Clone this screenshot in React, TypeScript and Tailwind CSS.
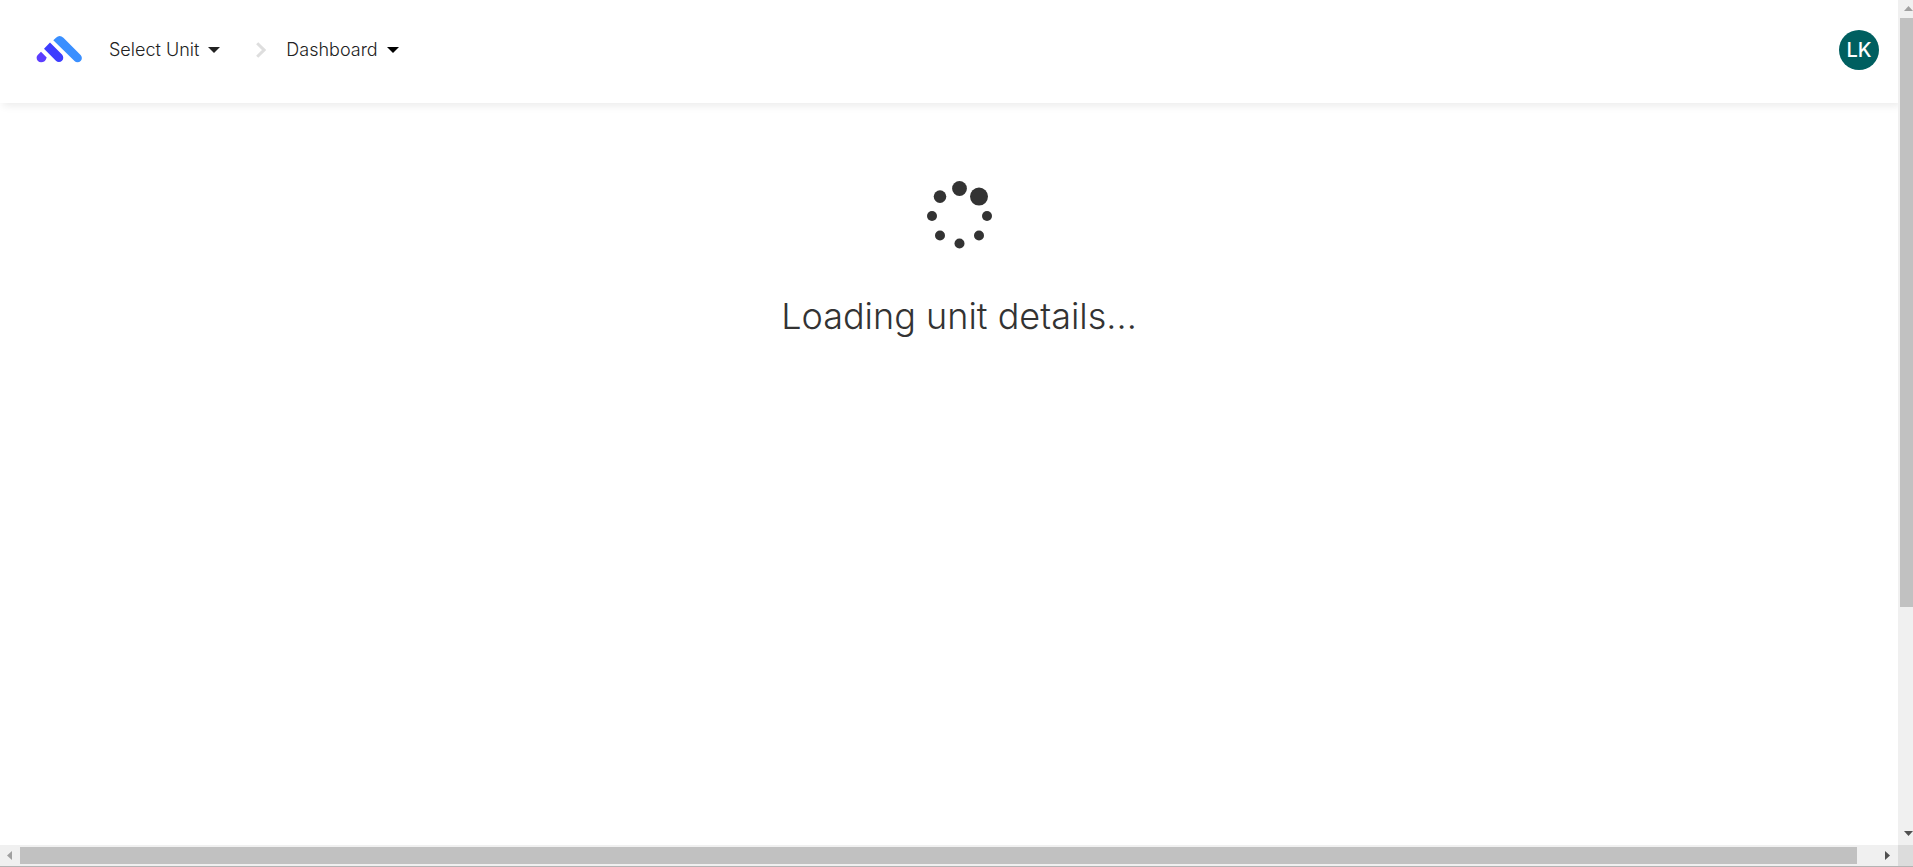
const dots: [number, number, number][] = [
  [35.5, 12.5, 7.4],
  [55, 20.6, 9],
  [63, 40, 5],
  [55, 59.5, 5],
  [35.5, 67.5, 5],
  [16, 59.5, 5],
  [8, 40, 5],
  [16, 20.6, 6.3],
];

function Logo() {
  return (
    <svg width="46" height="28" viewBox="0 0 46 28" aria-hidden="true">
      <path d="M17.3 4.3 20 1.8Q23.6-1.8 27.4 1.8L44.6 19A4.3 4.3 0 0 1 38.5 25.1Z" fill="#3a8fff" />
      <path d="M14 6.6 26 18.6A4.3 4.3 0 0 1 19.9 24.7L8 12.8Z" fill="#3d3dff" />
      <path d="M5 15.8 10.7 21.4Q9.2 26.3 5.1 26.3A4.5 4.5 0 0 1 .6 21.8Q.6 20.2 1.7 19.1Z" fill="#5c3dff" />
    </svg>
  );
}

function Caret({ className }: { className: string }) {
  return (
    <svg width="12" height="6" viewBox="0 0 12 6" className={className} aria-hidden="true">
      <path d="M0 0H12L6 6Z" fill="currentColor" />
    </svg>
  );
}

function Header() {
  return (
    <header className="flex h-[103px] items-start bg-white pt-[30px] pr-[19px] pl-9 shadow-[3px_3px_8px_rgba(0,0,0,0.08)]">
      <nav aria-label="Breadcrumb" className="flex h-10 items-center text-lg font-light text-[#222]">
        <a href="#" aria-label="Home" className="mr-[27px]">
          <Logo />
        </a>
        <button type="button" className="flex items-center gap-[9px]">
          Select Unit
          <Caret className="text-[#222]" />
        </button>
        <svg width="10" height="16" viewBox="0 0 10 16" className="mr-5 ml-9" aria-hidden="true">
          <path d="M1.2 1.3 8 8 1.2 14.7" fill="none" stroke="#dedede" strokeWidth="3" />
        </svg>
        <button type="button" className="flex items-center gap-[9px]">
          Dashboard
          <Caret className="text-black" />
        </button>
      </nav>
      <button type="button" aria-label="LK account" className="ml-auto size-10 rounded-full bg-[#005f60] text-xl font-medium text-white">
        LK
      </button>
    </header>
  );
}

function VerticalScrollbar() {
  return (
    <div aria-hidden="true" className="flex w-[15px] shrink-0 flex-col overflow-hidden bg-[#f0f0f0] pl-0.5">
      <svg width="17" height="18" viewBox="0 0 17 18" className="shrink-0">
        <path d="M4 11 8.5 6 13 11Z" fill="#a0a0a0" />
      </svg>
      <div className="h-[69.7%] w-[17px] bg-[#c1c1c1]" />
      <svg width="17" height="18" viewBox="0 0 17 18" className="mt-auto shrink-0">
        <path d="M4 4H13L8.5 9Z" fill="#505050" />
      </svg>
    </div>
  );
}

function HorizontalScrollbar() {
  return (
    <div aria-hidden="true" className="flex h-[22px] shrink-0 border-b border-[#b4b4b4]">
      <div className="flex flex-1 items-center bg-[#f0f0f0]">
        <svg width="20" height="17" viewBox="0 0 20 17" className="shrink-0">
          <path d="M12 4V13L7 8.5Z" fill="#a0a0a0" />
        </svg>
        <div className="mr-[21px] h-[17px] flex-1 bg-[#c1c1c1]" />
        <svg width="20" height="17" viewBox="0 0 20 17" className="shrink-0">
          <path d="M7 4V13L12 8.5Z" fill="#505050" />
        </svg>
      </div>
      <div className="w-[15px] bg-[#dcdcdc]" />
    </div>
  );
}

export default function App() {
  return (
    <div className="flex h-screen flex-col bg-white font-['Inter',sans-serif]">
      <div className="flex min-h-0 flex-1">
        <div className="min-w-0 flex-1 overflow-hidden">
          <Header />
          <main role="status" className="flex flex-col items-center pt-[73px] pl-5 text-[#333]">
            <svg width="70" height="80" viewBox="0 0 70 80" fill="#333" aria-hidden="true">
              {dots.map(([cx, cy, r]) => (
                <circle key={`${cx}-${cy}`} cx={cx} cy={cy} r={r} />
              ))}
            </svg>
            <h1 className="mt-10 text-4xl font-light">Loading unit details...</h1>
          </main>
        </div>
        <VerticalScrollbar />
      </div>
      <HorizontalScrollbar />
    </div>
  );
}
